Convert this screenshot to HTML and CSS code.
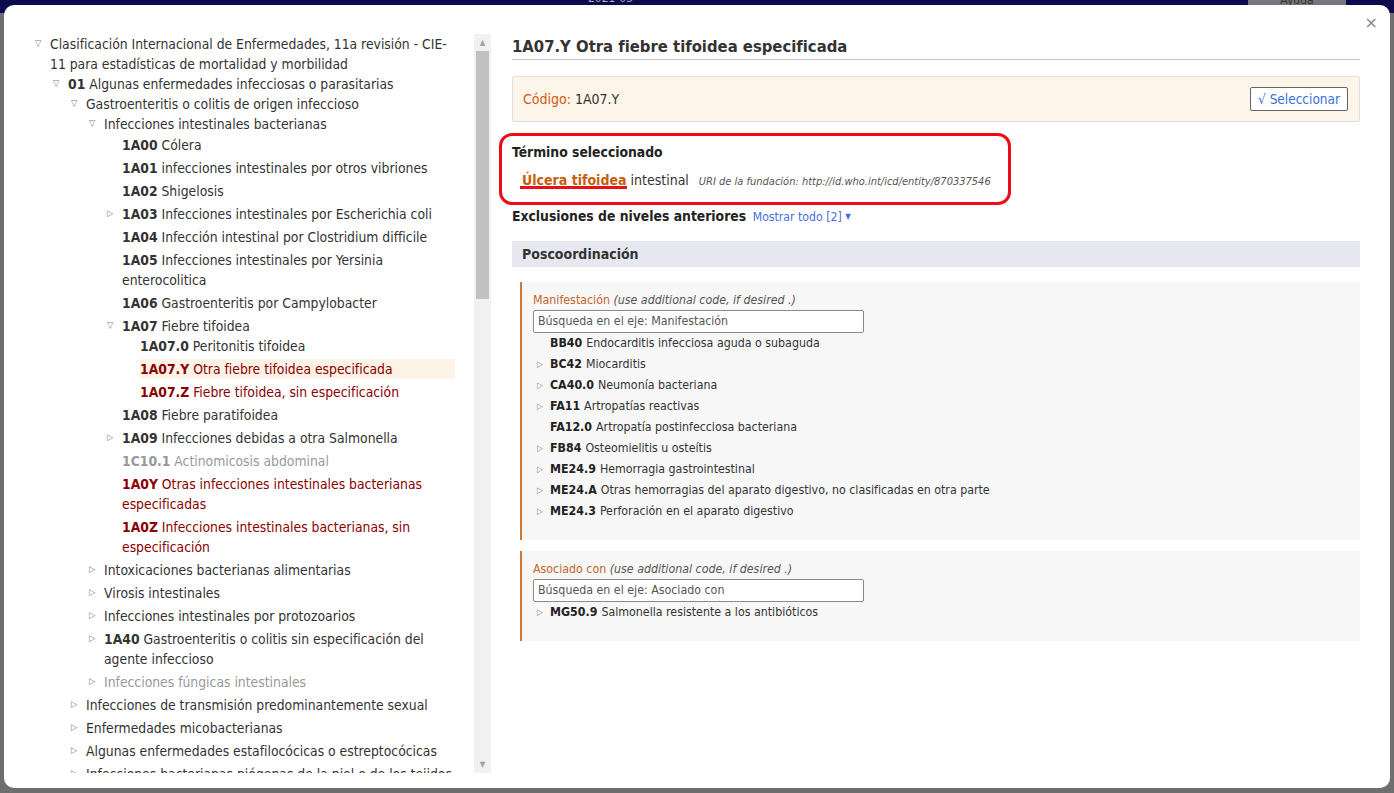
FILE: index.html
```html
<!DOCTYPE html>
<html lang="es">
<head>
<meta charset="utf-8">
<title>Herramienta de codificación de la CIE-11</title>
<link rel="stylesheet" href="styles.css">
</head>
<body>
<header class="page-header">
  <span class="app-title">Herramienta de codificación de la CIE-11</span>
  <span class="app-version">2021-05</span>
  <span class="app-help">Ayuda</span>
</header>

<div class="modal">
  <button class="modal-close" type="button">×</button>
  <div class="modal-body">
    <div class="tree-pane">
      <div class="tree-scroll">
        <ul class="tree">
          <li><div class="row"><span class="tg">▽</span><span class="lbl">Clasificación Internacional de Enfermedades, 11a revisión - CIE-11 para estadísticas de mortalidad y morbilidad</span></div>
            <ul>
              <li><div class="row"><span class="tg">▽</span><span class="lbl"><b>01</b> Algunas enfermedades infecciosas o parasitarias</span></div>
                <ul>
                  <li><div class="row"><span class="tg">▽</span><span class="lbl">Gastroenteritis o colitis de origen infeccioso</span></div>
                    <ul>
                      <li><div class="row"><span class="tg">▽</span><span class="lbl">Infecciones intestinales bacterianas</span></div>
                        <ul class="leaf-list">
                          <li><div class="row"><span class="tg"></span><span class="lbl"><b>1A00</b> Cólera</span></div></li>
                          <li><div class="row"><span class="tg"></span><span class="lbl"><b>1A01</b> infecciones intestinales por otros vibriones</span></div></li>
                          <li><div class="row"><span class="tg"></span><span class="lbl"><b>1A02</b> Shigelosis</span></div></li>
                          <li><div class="row"><span class="tg">▷</span><span class="lbl"><b>1A03</b> Infecciones intestinales por Escherichia coli</span></div></li>
                          <li><div class="row"><span class="tg"></span><span class="lbl"><b>1A04</b> Infección intestinal por Clostridium difficile</span></div></li>
                          <li><div class="row"><span class="tg"></span><span class="lbl"><b>1A05</b> Infecciones intestinales por Yersinia enterocolitica</span></div></li>
                          <li><div class="row"><span class="tg"></span><span class="lbl"><b>1A06</b> Gastroenteritis por Campylobacter</span></div></li>
                          <li><div class="row"><span class="tg">▽</span><span class="lbl"><b>1A07</b> Fiebre tifoidea</span></div>
                            <ul>
                              <li><div class="row"><span class="tg"></span><span class="lbl"><b>1A07.0</b> Peritonitis tifoidea</span></div></li>
                              <li><div class="row"><span class="tg"></span><span class="lbl sel red"><b>1A07.Y</b> Otra fiebre tifoidea especificada</span></div></li>
                              <li><div class="row"><span class="tg"></span><span class="lbl red"><b>1A07.Z</b> Fiebre tifoidea, sin especificación</span></div></li>
                            </ul>
                          </li>
                          <li><div class="row"><span class="tg"></span><span class="lbl"><b>1A08</b> Fiebre paratifoidea</span></div></li>
                          <li><div class="row"><span class="tg">▷</span><span class="lbl"><b>1A09</b> Infecciones debidas a otra Salmonella</span></div></li>
                          <li><div class="row"><span class="tg"></span><span class="lbl muted"><b>1C10.1</b> Actinomicosis abdominal</span></div></li>
                          <li><div class="row"><span class="tg"></span><span class="lbl red"><b>1A0Y</b> Otras infecciones intestinales bacterianas especificadas</span></div></li>
                          <li><div class="row"><span class="tg"></span><span class="lbl red"><b>1A0Z</b> Infecciones intestinales bacterianas, sin especificación</span></div></li>
                        </ul>
                      </li>
                      <li><div class="row"><span class="tg">▷</span><span class="lbl">Intoxicaciones bacterianas alimentarias</span></div></li>
                      <li><div class="row"><span class="tg">▷</span><span class="lbl">Virosis intestinales</span></div></li>
                      <li><div class="row"><span class="tg">▷</span><span class="lbl">Infecciones intestinales por protozoarios</span></div></li>
                      <li><div class="row"><span class="tg">▷</span><span class="lbl"><b>1A40</b> Gastroenteritis o colitis sin especificación del agente infeccioso</span></div></li>
                      <li><div class="row"><span class="tg">▷</span><span class="lbl muted">Infecciones fúngicas intestinales</span></div></li>
                    </ul>
                  </li>
                  <li><div class="row"><span class="tg">▷</span><span class="lbl">Infecciones de transmisión predominantemente sexual</span></div></li>
                  <li><div class="row"><span class="tg">▷</span><span class="lbl">Enfermedades micobacterianas</span></div></li>
                  <li><div class="row"><span class="tg">▷</span><span class="lbl">Algunas enfermedades estafilocócicas o estreptocócicas</span></div></li>
                  <li><div class="row"><span class="tg">▷</span><span class="lbl">Infecciones bacterianas piógenas de la piel o de los tejidos</span></div></li>
                </ul>
              </li>
            </ul>
          </li>
        </ul>
      </div>
      <div class="scrollbar">
        <span class="sb-arrow">▲</span>
        <span class="sb-thumb"></span>
        <span class="sb-space"></span>
        <span class="sb-arrow">▼</span>
      </div>
    </div>

    <div class="detail-pane">
      <h1 class="detail-title">1A07.Y Otra fiebre tifoidea especificada</h1>

      <div class="code-box">
        <span><span class="code-key">Código:</span> 1A07.Y</span>
        <button class="select-btn" type="button">√ Seleccionar</button>
      </div>

      <div class="term-mark">
        <h2 class="sec-title">Término seleccionado</h2>
        <div class="term-line">
          <span class="term-hl">Úlcera tifoidea</span> intestinal
          <span class="uri">URI de la fundación: http://id.who.int/icd/entity/870337546</span>
        </div>
      </div>

      <div class="excl">
        <h2 class="sec-title">Exclusiones de niveles anteriores</h2>
        <span class="show-all">Mostrar todo [2] <span class="caret">▼</span></span>
      </div>

      <div class="pc-bar">Poscoordinación</div>

      <div class="axis">
        <div class="axis-label"><span class="axis-name">Manifestación</span> <i>(use additional code, if desired .)</i></div>
        <div class="axis-input">Búsqueda en el eje: Manifestación</div>
        <ul class="axis-list">
          <li><span class="at"></span><b>BB40</b> Endocarditis infecciosa aguda o subaguda</li>
          <li><span class="at">▷</span><b>BC42</b> Miocarditis</li>
          <li><span class="at">▷</span><b>CA40.0</b> Neumonía bacteriana</li>
          <li><span class="at">▷</span><b>FA11</b> Artropatías reactivas</li>
          <li><span class="at"></span><b>FA12.0</b> Artropatía postinfecciosa bacteriana</li>
          <li><span class="at">▷</span><b>FB84</b> Osteomielitis u osteítis</li>
          <li><span class="at">▷</span><b>ME24.9</b> Hemorragia gastrointestinal</li>
          <li><span class="at">▷</span><b>ME24.A</b> Otras hemorragias del aparato digestivo, no clasificadas en otra parte</li>
          <li><span class="at">▷</span><b>ME24.3</b> Perforación en el aparato digestivo</li>
        </ul>
      </div>

      <div class="axis">
        <div class="axis-label"><span class="axis-name">Asociado con</span> <i>(use additional code, if desired .)</i></div>
        <div class="axis-input">Búsqueda en el eje: Asociado con</div>
        <ul class="axis-list">
          <li><span class="at">▷</span><b>MG50.9</b> Salmonella resistente a los antibióticos</li>
        </ul>
      </div>
    </div>
  </div>
</div>
</body>
</html>
```

FILE: styles.css
```css
* { box-sizing: border-box; }
html, body { margin: 0; padding: 0; }
body {
  width: 1394px;
  height: 793px;
  overflow: hidden;
  background: #6e6e6e;
  font-family: "DejaVu Sans Condensed", "DejaVu Sans", sans-serif;
  color: #333;
}
ul { list-style: none; margin: 0; padding: 0; }

.page-header {
  height: 13px;
  background: #0b0b4e;
  position: relative;
  overflow: hidden;
}
.app-title {
  position: absolute;
  left: 128px;
  top: -28px;
  font: bold 30px "DejaVu Sans", sans-serif;
  color: #b8b8cc;
}
.app-version {
  position: absolute;
  left: 588px;
  top: -9px;
  font-size: 12px;
  color: #a8a8bc;
}
.app-help {
  position: absolute;
  left: 1248px;
  top: 0;
  width: 98px;
  height: 13px;
  background: #76767e;
  color: #333;
  font-size: 12px;
  text-align: center;
  line-height: 0;
}

.modal {
  position: absolute;
  left: 4px;
  top: 5px;
  width: 1386px;
  height: 783px;
  background: #fff;
  border-radius: 10px;
  overflow: hidden;
}
.modal-close {
  position: absolute;
  right: 12px;
  top: 8px;
  border: 0;
  background: none;
  font: 16px "DejaVu Sans", sans-serif;
  color: #888;
  padding: 0;
  cursor: pointer;
}
.modal-body {
  display: flex;
  gap: 21px;
  padding: 29px 30px 15px 30px;
  height: 100%;
}

/* Tree pane */
.tree-pane {
  width: 457px;
  flex: none;
  display: flex;
  height: 739px;
}
.tree-scroll {
  flex: 1;
  overflow: hidden;
  padding-right: 19px;
}
.tree {
  font-size: 13.8px;
  line-height: 20px;
  color: #333;
}
.tree ul { padding-left: 18px; }
.tree .leaf-list { padding-top: 1px; }
.tree li { margin-bottom: 3px; }
.row {
  display: flex;
  align-items: flex-start;
}
.tg {
  width: 16px;
  flex: none;
  font-size: 9px;
  line-height: 19px;
  color: #7c7c7c;
  padding-left: 1px;
}
.lbl { flex: 1; }
.lbl b { font-weight: bold; }
.lbl.red { color: #8b0000; }
.lbl.muted { color: #999; }
.lbl.sel { background: #fdf3e7; }

.scrollbar {
  width: 17px;
  flex: none;
  background: #f1f1f1;
  display: flex;
  flex-direction: column;
  align-items: center;
}
.sb-arrow {
  height: 17px;
  font-size: 8px;
  line-height: 17px;
  color: #a3a3a3;
}
.sb-thumb {
  width: 13px;
  height: 248px;
  background: #c1c1c1;
}
.sb-space { flex: 1; }

/* Detail pane */
.detail-pane {
  width: 848px;
  flex: none;
  position: relative;
}
.detail-title {
  margin: 0;
  font-size: 16.5px;
  font-weight: bold;
  line-height: 24px;
  padding-top: 1px;
  color: #333;
  border-bottom: 1px solid #c4c4c4;
  height: 26px;
}
.code-box {
  margin-top: 16px;
  height: 46px;
  background: #fdf5e9;
  border: 1px solid #ddd;
  border-radius: 2px;
  display: flex;
  align-items: center;
  justify-content: space-between;
  padding: 0 11px 0 10px;
  font-size: 14px;
}
.code-key { color: #cc5d12; }
.select-btn {
  height: 24px;
  width: 98px;
  background: #fff;
  border: 1px solid #666;
  border-radius: 2px;
  color: #3c6fdc;
  font: 13.5px "DejaVu Sans Condensed", "DejaVu Sans", sans-serif;
  padding: 0;
}

.sec-title {
  margin: 0;
  font-size: 13.8px;
  font-weight: bold;
  line-height: 20px;
  color: #222;
  display: inline;
}
.term-mark {
  position: relative;
  margin-top: 20px;
}
.term-mark::before {
  content: "";
  position: absolute;
  left: -13px;
  top: -9px;
  width: 506px;
  height: 66px;
  border: 3px solid #ea0c16;
  border-radius: 13px;
}
.term-line {
  margin-top: 8px;
  padding-left: 10px;
  font-size: 14px;
  line-height: 20px;
}
.term-hl {
  color: #c85c0a;
  font-weight: bold;
  position: relative;
}
.term-hl::after {
  content: "";
  position: absolute;
  left: -2px;
  right: -1px;
  bottom: -1px;
  height: 3px;
  background: #e8111b;
}
.uri {
  font-size: 11px;
  font-style: italic;
  color: #555;
  margin-left: 6px;
}
.excl {
  margin-top: 14px;
  line-height: 20px;
}
.show-all {
  font-size: 12.2px;
  color: #4a6fe0;
  margin-left: 2px;
}
.caret { font-size: 8px; vertical-align: 2px; }

.pc-bar {
  margin-top: 14px;
  height: 26px;
  line-height: 26px;
  background: #e6e7ef;
  font-size: 14px;
  font-weight: bold;
  padding-left: 10px;
  color: #333;
}
.axis {
  margin: 15px 0 0 8px;
  background: #f7f7f7;
  border-left: 2px solid #cd7a36;
  padding: 10px 12px 18px 11px;
  font-size: 12.3px;
}
.axis + .axis { margin-top: 11px; }
.axis-label { line-height: 16px; color: #555; }
.axis-label i { color: #555; }
.axis-name { color: #c4652b; }
.axis-input {
  margin-top: 2px;
  width: 331px;
  height: 23px;
  background: #fff;
  border: 1px solid #8a8a8a;
  border-radius: 2px;
  line-height: 21px;
  padding-left: 4px;
  color: #555;
}
.axis-list li {
  display: flex;
  line-height: 21px;
  color: #333;
}
.axis-list li b { margin-right: 4px; color: #222; }
.at {
  width: 17px;
  flex: none;
  font-size: 8.5px;
  line-height: 20px;
  color: #8a8a8a;
  padding-left: 4px;
}
```
